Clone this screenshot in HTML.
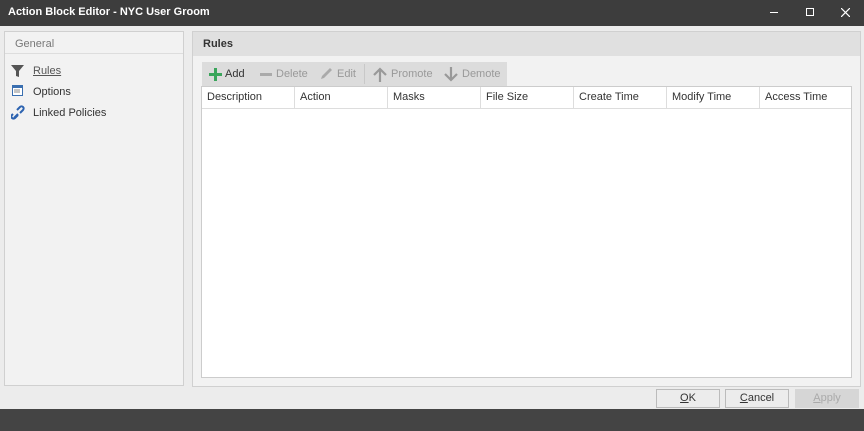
<html><head><style>
body{margin:0;width:864px;height:431px;background:#ececec;font-family:"Liberation Sans",sans-serif;font-size:11px;color:#333;position:relative;overflow:hidden}
.a{position:absolute}
.t{background:#3d3d3d;left:0;top:0;width:864px;height:26px;color:#fff;font-weight:bold;font-size:11px}
.bot{background:#444;left:0;top:409px;width:864px;height:22px}
.btn{border:1px solid #bbb;background:#ececec;height:17px;width:62px;text-align:center;line-height:17px;top:389px}
table{table-layout:fixed;border-collapse:collapse;font-size:11px;width:649px;color:#333}
th{font-weight:normal;text-align:left;padding-left:5px;border-right:1px solid #ddd;height:21px;border-bottom:1px solid #ddd;white-space:nowrap;overflow:hidden}
</style></head><body>
<div class="a t"><span class="a" style="left:8px;top:6px">Action Block Editor - NYC User Groom</span>
<span class="a" style="left:770px;top:12px;width:8px;height:1px;background:#fff"></span>
<span class="a" style="left:806px;top:8px;width:6px;height:6px;border:1px solid #fff"></span>
<svg class="a" style="left:841px;top:8px" width="9" height="9"><path d="M0 0L9 9M9 0L0 9" stroke="#fff" stroke-width="1.2"/></svg></div>
<div class="a" style="left:4px;top:31px;width:178px;height:353px;border:1px solid #d0d0d0;background:#f2f2f2">
<div style="height:22px;border-bottom:1px solid #ddd;color:#777;padding:6px 0 0 10px;box-sizing:border-box">General</div>
<div class="a" style="left:28px;top:33px;text-decoration:underline;color:#555">Rules</div>
<div class="a" style="left:28px;top:54px">Options</div>
<div class="a" style="left:28px;top:75px">Linked Policies</div>
<svg class="a" style="left:6px;top:32px" width="14" height="60"><path d="M0 1h13l-5 6v6l-3-1v-5z" fill="#555"/><rect x="1" y="21" width="11" height="11" fill="#3a6fb0"/><rect x="2" y="24" width="9" height="7" fill="#fff"/><path d="M3 26h6M3 28h6" stroke="#888"/><path d="M3 54l4-4M6 46l3-3a2 2 0 013 3l-3 3M2 50l-1 1a2 2 0 003 3l3-3" stroke="#2d63b0" stroke-width="2" fill="none"/></svg>
</div>
<div class="a" style="left:192px;top:31px;width:667px;height:354px;border:1px solid #d0d0d0;background:#f2f2f2">
<div style="height:24px;background:#e0e0e0;font-weight:bold;padding:6px 0 0 10px;box-sizing:border-box">Rules</div>
<div class="a" style="left:9px;top:30px;width:305px;height:24px;background:#dcdcdc;color:#999">
<svg class="a" style="left:7px;top:6px" width="13" height="13"><path d="M6.5 0v13M0 6.5h13" stroke="#3aa55b" stroke-width="3"/></svg><span class="a" style="left:23px;top:6px;color:#333">Add</span>
<span class="a" style="left:58px;top:11px;width:12px;height:3px;background:#aaa"></span><span class="a" style="left:74px;top:6px">Delete</span>
<svg class="a" style="left:117px;top:5px" width="14" height="14"><path d="M2 12l1-3 8-8 2 2-8 8z" fill="#aaa"/></svg><span class="a" style="left:135px;top:6px">Edit</span>
<span class="a" style="left:162px;top:2px;width:1px;height:20px;background:#c8c8c8"></span>
<svg class="a" style="left:171px;top:5px" width="14" height="15"><path d="M7 15V2M1 8l6-6 6 6" stroke="#999" stroke-width="2.2" fill="none"/></svg><span class="a" style="left:189px;top:6px">Promote</span>
<svg class="a" style="left:242px;top:5px" width="14" height="15"><path d="M7 0v13M1 7l6 6 6-6" stroke="#999" stroke-width="2.2" fill="none"/></svg><span class="a" style="left:260px;top:6px">Demote</span></div>
<div class="a" style="left:8px;top:54px;width:649px;height:290px;border:1px solid #ccc;background:#fff;overflow:hidden">
<table><tr><th style="width:86px">Description</th><th style="width:86px">Action</th><th style="width:86px">Masks</th><th style="width:86px">File Size</th><th style="width:86px">Create Time</th><th style="width:86px">Modify Time</th><th style="border-right:none">Access Time</th></tr></table></div>
</div>
<div class="a btn" style="left:656px"><u>O</u>K</div>
<div class="a btn" style="left:725px"><u>C</u>ancel</div>
<div class="a btn" style="left:795px;background:#d6d6d6;border-color:#d6d6d6;color:#aaa"><u>A</u>pply</div>
<div class="a bot"></div>
</body></html>
